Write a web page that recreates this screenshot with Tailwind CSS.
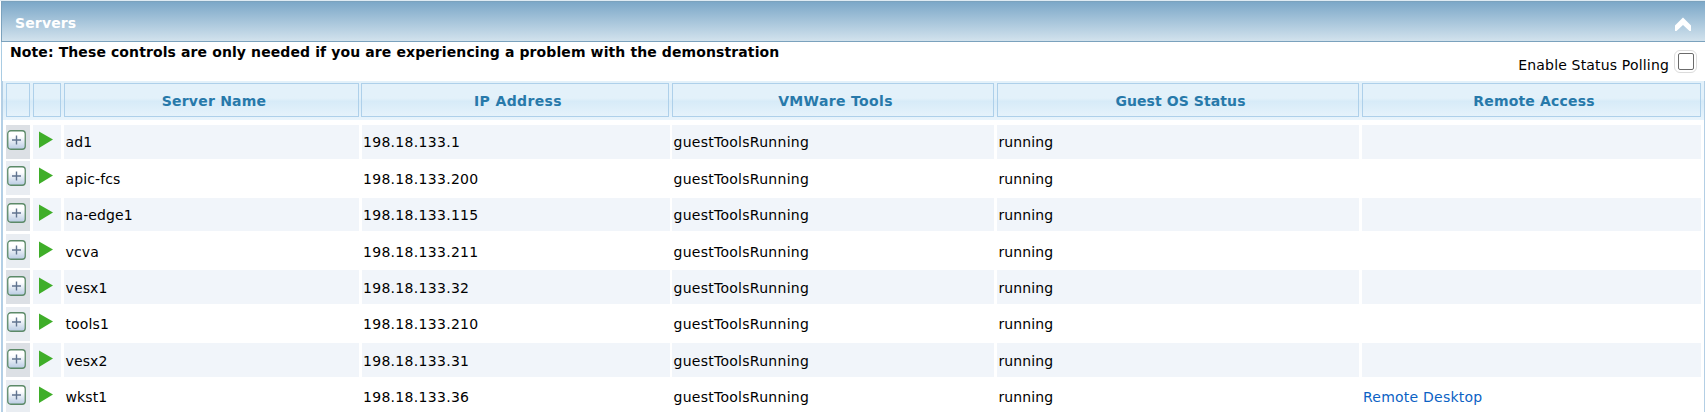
<!DOCTYPE html>
<html lang="en">
<head>
<meta charset="utf-8">
<title>Servers</title>
<script src="https://cdn.jsdelivr.net/npm/@tailwindcss/browser@4"></script>
</head>
<body class="h-[412px] w-[1705px] overflow-hidden bg-white text-[14px] leading-[18px] text-black" style="font-family:Verdana,'DejaVu Sans',sans-serif">
<div class="h-px bg-[#dfebf3]"></div>
<header class="ml-[1px] flex h-[41px] items-center justify-between border-y border-l border-[#7ba2bd] bg-linear-to-b from-[#7ca8c8] to-[#d2e2ed] pl-[13px] pr-[13px]">
  <h1 class="pt-[2px] font-bold tracking-[0.14px] text-white">Servers</h1>
  <svg class="mt-[5px] h-[16px] w-[18px]" viewBox="0 0 18 16"><path d="M1 9.500 9 1.500l8 8V15h-1.500L9 9l-6.500 6H1z" fill="#fff"/></svg>
</header>
<section class="ml-[1px] flex h-[39px] justify-between border-l border-[#a9cce3] pl-[8px] pr-[8px]">
  <p class="pt-[1px] font-bold tracking-[0.105px]">Note: These controls are only needed if you are experiencing a problem with the demonstration</p>
  <label class="flex gap-[5px]"><span class="pt-[14px] tracking-[0.17px]">Enable Status Polling</span>
    <span class="mt-[8px] grid h-[23px] w-[23px] place-items-center rounded-[6px] border border-[#dcdcdc]"><span class="h-[17px] w-[16px] rounded-[2px] border border-[#6b6b6b] bg-white"></span></span></label>
</section>
<main class="ml-[1px] h-[331px] border-l-2 border-r border-[#b3cfe5]">
  <div class="flex h-[39px] bg-linear-to-b from-[#e3f1fa] from-44% via-[#d7ebf8] via-52% to-[#e9f4fc] pl-[3px] pt-[2px] text-center font-bold leading-[34px] text-[#2779aa]">
    <div class="mr-[3px] h-[34px] w-[24px] border border-[#aed0ea]"></div>
    <div class="mr-[3px] h-[34px] w-[28px] border border-[#aed0ea]"></div>
    <div class="mr-[2px] h-[34px] w-[295px] border border-[#aed0ea] pl-[5px] tracking-[0.22px]">Server Name</div>
    <div class="mr-[3px] h-[34px] w-[308px] border border-[#aed0ea] pl-[6px] tracking-[0.38px]">IP Address</div>
    <div class="mr-[3px] h-[34px] w-[322px] border border-[#aed0ea] pl-[5px] tracking-[0.35px]">VMWare Tools</div>
    <div class="mr-[3px] h-[34px] w-[362px] border border-[#aed0ea] pl-[5px] tracking-[0.08px]">Guest OS Status</div>
    <div class="h-[34px] w-[339px] border border-[#aed0ea] pl-[5px] tracking-[0.17px]">Remote Access</div>
  </div>
  <div id="rows" class="pl-[3px] pt-[5px]"></div>
</main>
<script>
const rows = [
  ['ad1','198.18.133.1','h-[36px]','h-[34px]','pt-[8px]','mt-[5px]'],
  ['apic-fcs','198.18.133.200','h-[37px]','h-[34px]','pt-[9px]','mt-[5px]'],
  ['na-edge1','198.18.133.115','h-[36px]','h-[33px]','pt-[8px]','mt-[5px]'],
  ['vcva','198.18.133.211','h-[36px]','h-[34px]','pt-[9px]','mt-[6px]'],
  ['vesx1','198.18.133.32','h-[37px]','h-[34px]','pt-[9px]','mt-[6px]'],
  ['tools1','198.18.133.210','h-[36px]','h-[34px]','pt-[8px]','mt-[5px]'],
  ['vesx2','198.18.133.31','h-[37px]','h-[34px]','pt-[9px]','mt-[6px]'],
  ['wkst1','198.18.133.36','h-[32px]','h-[32px]','pt-[8px]','mt-[5px]'],
];
const expand = m => `<svg class="${m} ml-[1px] h-[20px] w-[19px]" viewBox="0 0 19 20"><defs><linearGradient id="g" x2="0" y2="1"><stop offset=".3" stop-color="#fff"/><stop offset="1" stop-color="#b9cbe3"/></linearGradient></defs><rect x=".75" y=".75" width="17.5" height="18.5" rx="3" fill="url(#g)" stroke="#5c8a68" stroke-width="1.3"/><path d="M9.500 5.500v9M5 10h9" stroke="#60738f" stroke-width="1.4"/></svg>`;
const play = m => `<svg class="${m} ml-[6px] h-[19px] w-[14px]" viewBox="0 0 14 19"><path d="M0 1.500 14 9.500 0 18z" fill="#3fae29"/></svg>`;
document.getElementById('rows').innerHTML = rows.map(([n,ip,p,h,t,m],i) => {
  const c = i%2 ? 'bg-white' : 'bg-[#f1f5fa]';
  return `<div class="flex ${p}">
  <div class="mr-[3px] w-[24px] ${h} flex ${i%2?'bg-[#e9edf2]':'bg-[#dce0e5]'}">${expand(m)}</div>
  <div class="mr-[3px] w-[28px] ${h} flex ${c}">${play(m)}</div>
  <div class="mr-[3px] w-[295px] pl-[1.5px] tracking-[0.12px] ${h} ${t} ${c}">${n}</div>
  <div class="mr-[2px] w-[308px] pl-[1px] tracking-[0.3px] ${h} ${t} ${c}">${ip}</div>
  <div class="mr-[3px] w-[322px] pl-[1.5px] tracking-[0.27px] ${h} ${t} ${c}">guestToolsRunning</div>
  <div class="mr-[3px] w-[362px] pl-[1.5px] tracking-[0.1px] ${h} ${t} ${c}">running</div>
  <div class="w-[339px] pl-[1px] tracking-[0.23px] ${h} ${t} ${c}">${i==7?'<a class="text-[#0b62c4]">Remote Desktop</a>':''}</div></div>`;
}).join('');
</script>
</body>
</html>
